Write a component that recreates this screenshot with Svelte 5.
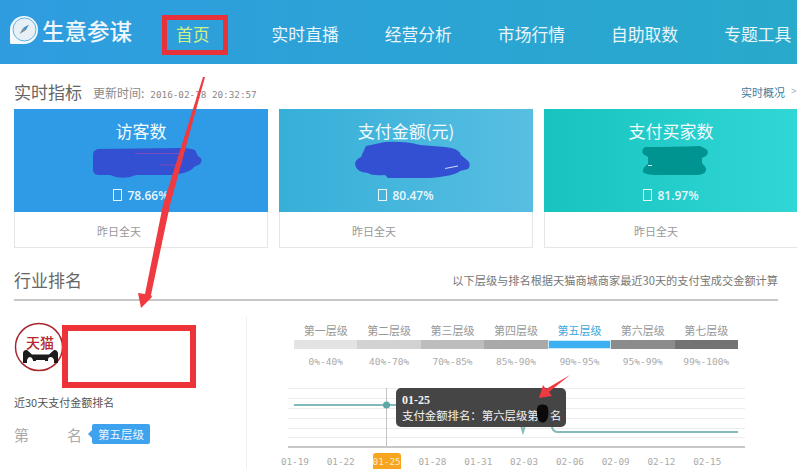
<script lang="ts">
  // 生意参谋 首页 — 实时指标 + 行业排名
  const navItems = ['实时直播', '经营分析', '市场行情', '自助取数', '专题工具'];

  const cards = [
    { title: '访客数', pct: '78.66%', cls: 'blue', tail: 44 },
    { title: '支付金额(元)', pct: '80.47%', cls: 'sky', tail: 64 },
    { title: '支付买家数', pct: '81.97%', cls: 'teal', tail: 30 }
  ];

  const tiers = [
    { name: '第一层级', range: '0%-40%', color: '#e3e3e3' },
    { name: '第二层级', range: '40%-70%', color: '#d2d2d2' },
    { name: '第三层级', range: '70%-85%', color: '#bdbdbd' },
    { name: '第四层级', range: '85%-90%', color: '#a9a9a9' },
    { name: '第五层级', range: '90%-95%', color: '#3cb0f0', active: true },
    { name: '第六层级', range: '95%-99%', color: '#8c8c8c' },
    { name: '第七层级', range: '99%-100%', color: '#737373' }
  ];

  const dates = ['01-19', '01-22', '01-25', '01-28', '01-31', '02-03', '02-06', '02-09', '02-12', '02-15'];
  const gridY = [0.5, 10.5, 20.5, 30.5, 40.5, 49.5];
</script>

<div class="page">
  <header class="topbar">
    <div class="logo">
      <svg class="logo-icon" width="30" height="30" viewBox="0 0 30 30">
        <path d="M15 1a14 14 0 0 1 0 28H2.500A1.500 1.500 0 0 1 1 27.500V15A14 14 0 0 1 15 1z" fill="#f4fafd" />
        <circle cx="15.500" cy="14.500" r="11.500" fill="#e6f0f6" stroke="#5fb4e4" />
        <path d="M20 9.500 16.500 15.500 14 13z" fill="#3f8fc4" />
        <path d="M10.500 19 14 13 16.500 15.500z" fill="#7d8f9c" />
      </svg>
      <span class="logo-text">生意参谋</span>
    </div>
    <nav class="nav">
      <span class="nav-home">首页</span>
      {#each navItems as item}
        <span class="nav-item">{item}</span>
      {/each}
    </nav>
  </header>

  <section class="realtime">
    <div class="rt-head">
      <h2>实时指标</h2>
      <span class="update">更新时间:<span class="mono">2016-02-18 20:32:57</span></span>
      <span class="more">实时概况<i>&gt;</i></span>
    </div>
    <div class="cards">
      {#each cards as card}
        <div class="card">
          <div class="card-top {card.cls}">
            <div class="card-title">{card.title}</div>
            <div class="card-value"></div>
            <div class="card-pct"><span class="tofu"></span>{card.pct}</div>
          </div>
          <div class="card-bottom">
            <span>昨日全天</span><span style="width:{card.tail}px"></span>
          </div>
        </div>
      {/each}
    </div>
  </section>

  <section class="rank">
    <div class="rank-head">
      <h2>行业排名</h2>
      <span class="rank-note">以下层级与排名根据天猫商城商家最近30天的支付宝成交金额计算</span>
    </div>
    <div class="rank-body">
      <div class="rank-left">
        <svg class="tmall" width="50" height="50" viewBox="0 0 50 50">
          <circle cx="25" cy="25" r="23.500" fill="#fff" stroke="#a8272d" stroke-width="1.500" />
          <text x="26" y="26" text-anchor="middle" class="tmall-text">天猫</text>
          <path d="M9 41V31Q9.500 27.500 13 28L18 32.500H35L40 28Q43 27.500 44 31V41H40V38Q39 35 36.500 35T34 38V39H31V38H22V39H19V38Q18 35 16 35T13 38V41z" fill="#1c1c1c" />
        </svg>
        <div class="rank-caption">近30天支付金额排名</div>
        <div class="rank-pos">
          <span class="pos-word">第</span>
          <span class="pos-word second">名</span>
          <span class="tag">第五层级</span>
        </div>
      </div>

      <div class="rank-right">
        <div class="tiers">
          {#each tiers as tier}
            <div class="tier">
              <div class="tier-name" class:on={tier.active}>{tier.name}</div>
              <div class="tier-bar" class:on={tier.active} style="background:{tier.color}"></div>
              <div class="tier-range">{tier.range}</div>
            </div>
          {/each}
        </div>

        <div class="chart">
          <svg width="457" height="60" viewBox="0 0 457 60">
            {#each gridY as y}
              <line x1="0" x2="457" y1={y} y2={y} stroke="#ececec" />
            {/each}
            <line x1="0" x2="457" y1="59" y2="59" stroke="#c8c8c8" stroke-width="2" />
            <line x1="98.500" x2="98.500" y1="0" y2="58" stroke="#c4c4c4" />
            <path d="M6 17H227L235 44 243 17H260L264 39Q265 44 270 44H450" fill="none" stroke="#82b9ba" stroke-width="2" />
            <circle cx="98.500" cy="17" r="3.500" fill="#5aa9a5" />
          </svg>
          <div class="tooltip">
            <b>01-25</b>
            <span>支付金额排名：第六层级第　名</span>
          </div>
        </div>

        <div class="dates">
          {#each dates as d}
            <span class="date" class:on={d === '01-25'}>{d}</span>
          {/each}
        </div>
      </div>
    </div>
  </section>

  <!-- 涂抹和红色标注，盖在页面上面 -->
  <svg class="marks" width="797" height="469" viewBox="0 0 797 469">
    <path d="M98 149Q92 150 93 158V170Q93 175 100 175L110 175Q118 179 130 177L136 175 172 175Q190 173 194 167L200 164Q204 159 198 156L195 150Q190 148 180 148z" fill="#3450d2" />
    <path d="M135 153.500H180M160 165H178" stroke="#7a4cbc" fill="none" />
    <path d="M366 146Q363 152 361 157 355 160 355 164 356 170 362 172L368 173Q372 176 385 175L388 178H430Q455 176 460 171L468 169Q472 164 467 160L461 155Q459 148 445 147L420 145Q405 141 385 142z" fill="#3450d2" />
    <path d="M445 168.500 458 166" stroke="#cfe0f5" fill="none" />
    <path d="M645 147Q641 150 643 154L648 157 648 164Q642 168 643 172 646 175 655 175H698Q707 174 706 168L702 163 702 158 706 156Q710 152 706 149L700 146Q670 147 645 147z" fill="#009491" />
    <path d="M648 165.500H652" stroke="#dff" fill="none" />
    <path d="M538 406c2-2 7-2 9 0s2 12-1 15-7 1-8-2-2-10 0-13z" fill="#0a0a0a" />

    <rect x="164.500" y="17.500" width="61" height="35" fill="none" stroke="#e8323a" stroke-width="5" />
    <rect x="65" y="328" width="128" height="57" fill="none" stroke="#ee3338" stroke-width="6" />
    <path d="M203 77 205 77 170 205 151 295 152 297 141 308 138 293 145 294 163 205z" fill="#ee3a40" />
    <path d="M570 375 549 392 552 396 539 398 543 385 546 389z" fill="#ee3a40" />
  </svg>
</div>

<style>
  :global(body) {
    margin: 0;
    background: #fff;
  }

  .page {
    position: relative;
    width: 797px;
    height: 469px;
    overflow: hidden;
    background: #fff;
    font-family: "Noto Sans CJK SC", "Liberation Sans", sans-serif;
  }

  h2 {
    margin: 0;
    font-size: 17px;
    line-height: 22px;
    font-weight: 400;
    color: #666;
  }

  .topbar {
    display: flex;
    align-items: center;
    height: 64px;
    background: linear-gradient(90deg, #2f9ce0, #28aacb);
    color: #fff;
  }

  .logo {
    display: flex;
    align-items: center;
    gap: 3px;
    margin-left: 9px;
    width: 167px;
    flex-shrink: 0;
    margin-top: -5px;
  }

  .logo-text {
    font-size: 22.500px;
    font-weight: 500;
    line-height: 30px;
    color: #eef7fc;
  }

  .nav {
    display: flex;
    align-items: center;
    gap: 46px;
    white-space: nowrap;
    font-size: 16.800px;
    line-height: 24px;
    color: #eaf5fa;
    margin-top: 3px;
  }

  .nav-home {
    color: #cdf08a;
    margin-right: 16px;
  }

  .realtime {
    padding: 16px 0 0 14px;
  }

  .rt-head {
    display: flex;
    align-items: center;
    height: 24px;
    margin-bottom: 5px;
  }

  .update {
    margin-left: 11px;
    font-size: 12px;
    color: #888;
  }

  .mono {
    margin-left: 6px;
    font-family: "DejaVu Sans Mono", monospace;
    font-size: 9.300px;
  }

  .more {
    display: flex;
    align-items: center;
    gap: 6px;
    margin-left: auto;
    font-size: 11px;
    color: #3f7c9e;
    white-space: nowrap;
    width: 56px;
  }

  .more i {
    font-style: normal;
    color: #9ab;
    font-family: "Liberation Mono", monospace;
    font-size: 9px;
  }

  .cards {
    display: flex;
    gap: 11px;
  }

  .card {
    flex: 0 0 254px;
  }

  .card-top {
    display: flex;
    flex-direction: column;
    align-items: center;
    height: 103px;
    color: #fff;
  }

  .blue { background: #2f9ae6; }
  .sky { background: linear-gradient(90deg, #36afd8, #58bee2); }
  .teal { background: linear-gradient(90deg, #17c4bf, #31d6d6); }

  .card-title {
    margin-top: 10px;
    font-size: 17px;
    line-height: 24px;
    color: #f2fafd;
  }

  .card-value {
    height: 42px;
  }

  .card-pct {
    display: flex;
    align-items: center;
    gap: 5px;
    height: 20px;
    font-family: "Open Sans", sans-serif;
    font-size: 12px;
    font-weight: 600;
    color: #e8f6fc;
  }

  .tofu {
    width: 7px;
    height: 10px;
    border: 1px solid #e8f6fc;
  }

  .card-bottom {
    display: flex;
    align-items: center;
    justify-content: center;
    height: 36px;
    box-sizing: border-box;
    padding-top: 3px;
    border: 1px solid #e6e6e6;
    border-top: none;
    font-size: 11px;
    color: #999;
  }

  .rank {
    padding: 0 19px 0 14px;
  }

  .rank-head {
    display: flex;
    align-items: center;
    justify-content: space-between;
    height: 53px;
    padding-top: 12px;
    box-sizing: border-box;
    border-bottom: 2px solid #c6c6c6;
    margin-bottom: 23px;
  }

  .rank-note {
    font-size: 11.200px;
    color: #777;
    white-space: nowrap;
  }

  .rank-body {
    display: flex;
    height: 146px;
  }

  .rank-left {
    flex: 0 0 233px;
    margin-top: -7px;
    padding-top: 5px;
    box-sizing: border-box;
    border-right: 1px solid #eee;
  }

  .tmall {
    display: block;
  }

  .tmall-text {
    font-size: 14px;
    font-weight: 500;
    fill: #b7282e;
  }

  .rank-caption {
    margin-top: 22px;
    font-size: 11px;
    line-height: 16px;
    color: #555;
  }

  .rank-pos {
    position: relative;
    display: flex;
    align-items: center;
    height: 22px;
    margin-top: 13px;
  }

  .pos-word {
    font-size: 15px;
    color: #aaa;
  }

  .pos-word.second {
    margin-left: 38px;
  }

  .tag {
    position: relative;
    margin-left: 10px;
    padding: 0 6px;
    height: 20px;
    line-height: 20px;
    background: #3ea2ee;
    border-radius: 2px;
    font-size: 11.500px;
    color: #eaf6ff;
  }

  .tag::before {
    content: "";
    position: absolute;
    left: -4px;
    top: 6px;
    border-style: solid;
    border-width: 4px 4px 4px 0;
    border-color: transparent #3ea2ee transparent transparent;
  }

  .rank-right {
    flex: 1;
    min-width: 0;
    padding-left: 41px;
    margin-top: -2px;
  }

  .tiers {
    display: flex;
    width: 444px;
    margin-left: 6px;
  }

  .tier {
    flex: 1;
    text-align: center;
  }

  .tier-name {
    font-size: 11px;
    line-height: 16px;
    color: #999;
  }

  .tier-name.on {
    color: #3ea8dc;
  }

  .tier-bar {
    height: 9px;
    margin-top: 2px;
    box-sizing: border-box;
  }

  .tier-bar.on {
    border: 1px solid #cfeaf8;
  }

  .tier-range {
    margin-top: 7px;
    font-family: "DejaVu Sans Mono", monospace;
    font-size: 9.500px;
    line-height: 12px;
    color: #aaa;
  }

  .chart {
    position: relative;
    width: 457px;
    height: 60px;
    margin-top: 20px;
  }

  .chart svg {
    display: block;
  }

  .tooltip {
    position: absolute;
    left: 108px;
    top: 0;
    display: flex;
    flex-direction: column;
    justify-content: center;
    width: 170px;
    height: 39px;
    box-sizing: border-box;
    padding-left: 6px;
    background: #454545;
    border-radius: 5px;
    color: #f2f2f2;
    font-size: 11.400px;
    line-height: 15px;
    white-space: nowrap;
  }

  .tooltip b {
    font-family: "Liberation Serif", serif;
    font-size: 12px;
  }

  .dates {
    display: flex;
    width: 457px;
    margin-left: -16px;
    margin-top: 5px;
  }

  .date {
    flex: 0 0 45.800px;
    height: 17px;
    line-height: 18px;
    text-align: center;
    font-family: "DejaVu Sans Mono", monospace;
    font-size: 9.300px;
    color: #aaa;
  }

  .date.on {
    flex: 0 0 28px;
    margin: 0 9px;
    background: #f7a51e;
    border-radius: 3px 3px 0 0;
    color: #fdebc8;
    white-space: nowrap;
  }

  .marks {
    position: absolute;
    left: 0;
    top: 0;
    pointer-events: none;
  }
</style>
